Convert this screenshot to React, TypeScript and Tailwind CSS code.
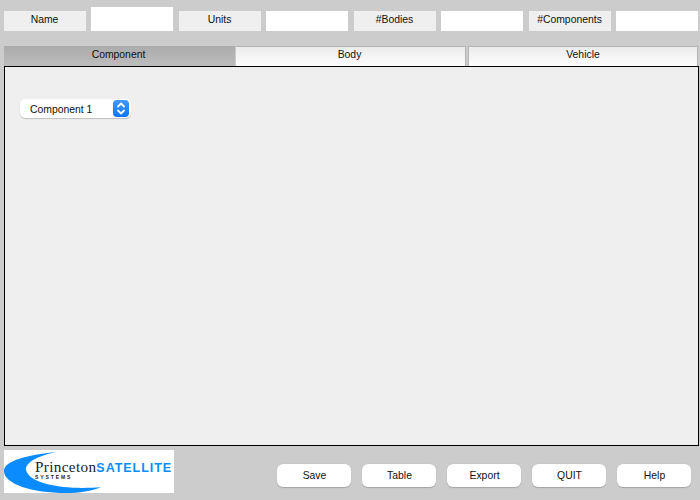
const font = "font-['Liberation_Sans',Arial,sans-serif]";

function Label({ text }: { text: string }) {
  return (
    <div className="w-[82px] h-[20px] bg-[#efefef] flex items-center justify-center pb-[3px] pr-[1px] text-[10.4px] text-[#111]">
      {text}
    </div>
  );
}

function Input({ tall }: { tall?: boolean }) {
  return <div className={tall ? "w-[82px] h-[24px] bg-white" : "w-[82px] h-[20px] bg-white"} />;
}

function Btn({ text }: { text: string }) {
  return (
    <button className="w-[74px] h-[23px] bg-white rounded-[6px] shadow-[0_0.5px_1px_rgba(0,0,0,0.2)] text-[10.4px] text-[#111] flex items-center justify-center pl-[1px]">
      {text}
    </button>
  );
}

function Logo() {
  return (
    <div className="relative w-[170px] h-[43px] bg-white overflow-hidden shrink-0">
      <svg className="absolute left-0 top-0" width="170" height="43" viewBox="0 0 170 43">
        <path
          d="M53 2 C22 5 0 11 0 21 C0 34 28 43 62 43 C75 43 88 41 97 37 C68 40 26 36 22 20 C21 12 36 5 53 2 Z"
          fill="#0a8cff"
        />
      </svg>
      <div className="absolute left-[31px] top-[9px] flex items-baseline leading-[15px] whitespace-nowrap">
        <span className="font-['Liberation_Serif',serif] text-[15.2px] tracking-[0.35px] text-[#222]">Princeton</span>
        <span className="font-['Liberation_Sans',sans-serif] font-bold text-[12.5px] tracking-[0.95px] text-[#0a8cff]">SATELLITE</span>
      </div>
      <div className="absolute left-[31px] top-[25px] text-[5px] leading-[4px] font-bold tracking-[1.9px] text-[#222]">
        SYSTEMS
      </div>
    </div>
  );
}

export default function App() {
  return (
    <div className={`w-[700px] h-[500px] bg-[#cccccc] overflow-hidden flex flex-col pl-[4px] ${font}`}>
      <div className="flex items-end h-[31px] shrink-0">
        <Label text="Name" />
        <div className="ml-[5px]"><Input tall /></div>
        <div className="ml-[6px]"><Label text="Units" /></div>
        <div className="ml-[5px]"><Input /></div>
        <div className="ml-[6px]"><Label text="#Bodies" /></div>
        <div className="ml-[5px]"><Input /></div>
        <div className="ml-[6px]"><Label text="#Components" /></div>
        <div className="ml-[5px]"><Input /></div>
      </div>

      <div className="flex mt-[15px] h-[20px] shrink-0 text-[10.4px] text-[#111]">
        <div className="w-[231px] pb-[3px] pr-[2px] bg-gradient-to-b from-[#ababab] to-[#bdbdbd] flex items-center justify-center">
          Component
        </div>
        <div className="ml-[1px] w-[230px] pb-[3px] pr-[2px] bg-gradient-to-b from-[#ececec] to-[#fdfdfd] border-t border-r border-[#b4b4b4] flex items-center justify-center">
          Body
        </div>
        <div className="ml-[2px] w-[230px] pb-[3px] bg-gradient-to-b from-[#ececec] to-[#fdfdfd] border-t border-x border-[#b4b4b4] flex items-center justify-center">
          Vehicle
        </div>
      </div>

      <div className="w-[695px] h-[380px] shrink-0 bg-[#efefef] border border-black pt-[32px] pl-[15px]">
        <div className="w-[111px] h-[19px] bg-white rounded-[5px] shadow-[0_1px_1px_rgba(0,0,0,0.2)] flex items-center justify-between pl-[10px] pr-[2px]">
          <span className="text-[10.4px] text-[#111] pt-[2px]">Component 1</span>
          <div className="w-[16px] h-[17px] rounded-[4px] bg-gradient-to-b from-[#3f9bff] to-[#0a74f5] flex items-center justify-center">
            <svg width="12" height="15" viewBox="0 0 12 15" fill="none" stroke="white" strokeWidth="1.8" strokeLinecap="round" strokeLinejoin="round">
              <path d="M3 5.5 L6 2.5 L9 5.5" />
              <path d="M3 9.5 L6 12.5 L9 9.5" />
            </svg>
          </div>
        </div>
      </div>

      <div className="flex mt-[4px]">
        <Logo />
        <div className="flex gap-[11px] ml-[103px] mt-[14px]">
          <Btn text="Save" />
          <Btn text="Table" />
          <Btn text="Export" />
          <Btn text="QUIT" />
          <Btn text="Help" />
        </div>
      </div>
    </div>
  );
}
